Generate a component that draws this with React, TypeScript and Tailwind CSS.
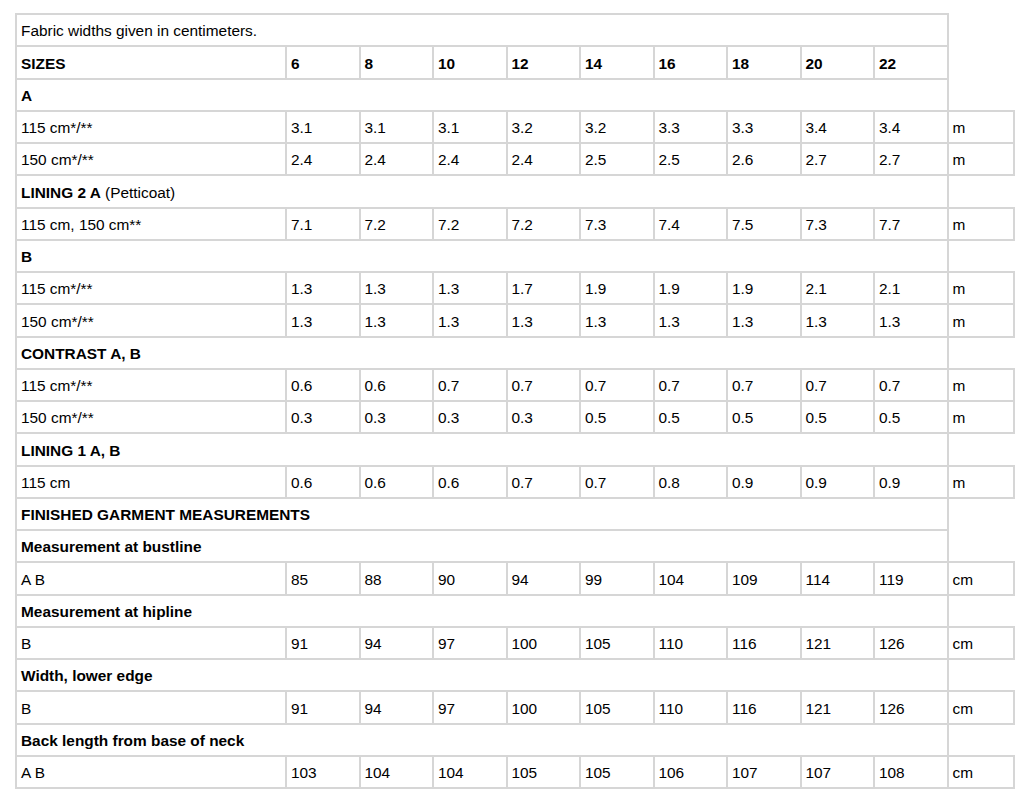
import React from "react";

type Row =
  | { kind: "note"; text: string }
  | { kind: "sizes"; cells: string[] }
  | { kind: "section"; bold: string; rest?: string }
  | { kind: "data"; label: string; values: string[]; unit: string };

const rows: Row[] = [
  { kind: "note", text: "Fabric widths given in centimeters." },
  { kind: "sizes", cells: ["SIZES", "6", "8", "10", "12", "14", "16", "18", "20", "22"] },
  { kind: "section", bold: "A" },
  { kind: "data", label: "115 cm*/**", values: ["3.1", "3.1", "3.1", "3.2", "3.2", "3.3", "3.3", "3.4", "3.4"], unit: "m" },
  { kind: "data", label: "150 cm*/**", values: ["2.4", "2.4", "2.4", "2.4", "2.5", "2.5", "2.6", "2.7", "2.7"], unit: "m" },
  { kind: "section", bold: "LINING 2 A", rest: " (Petticoat)" },
  { kind: "data", label: "115 cm, 150 cm**", values: ["7.1", "7.2", "7.2", "7.2", "7.3", "7.4", "7.5", "7.3", "7.7"], unit: "m" },
  { kind: "section", bold: "B" },
  { kind: "data", label: "115 cm*/**", values: ["1.3", "1.3", "1.3", "1.7", "1.9", "1.9", "1.9", "2.1", "2.1"], unit: "m" },
  { kind: "data", label: "150 cm*/**", values: ["1.3", "1.3", "1.3", "1.3", "1.3", "1.3", "1.3", "1.3", "1.3"], unit: "m" },
  { kind: "section", bold: "CONTRAST A, B" },
  { kind: "data", label: "115 cm*/**", values: ["0.6", "0.6", "0.7", "0.7", "0.7", "0.7", "0.7", "0.7", "0.7"], unit: "m" },
  { kind: "data", label: "150 cm*/**", values: ["0.3", "0.3", "0.3", "0.3", "0.5", "0.5", "0.5", "0.5", "0.5"], unit: "m" },
  { kind: "section", bold: "LINING 1 A, B" },
  { kind: "data", label: "115 cm", values: ["0.6", "0.6", "0.6", "0.7", "0.7", "0.8", "0.9", "0.9", "0.9"], unit: "m" },
  { kind: "section", bold: "FINISHED GARMENT MEASUREMENTS" },
  { kind: "section", bold: "Measurement at bustline" },
  { kind: "data", label: "A B", values: ["85", "88", "90", "94", "99", "104", "109", "114", "119"], unit: "cm" },
  { kind: "section", bold: "Measurement at hipline" },
  { kind: "data", label: "B", values: ["91", "94", "97", "100", "105", "110", "116", "121", "126"], unit: "cm" },
  { kind: "section", bold: "Width, lower edge" },
  { kind: "data", label: "B", values: ["91", "94", "97", "100", "105", "110", "116", "121", "126"], unit: "cm" },
  { kind: "section", bold: "Back length from base of neck" },
  { kind: "data", label: "A B", values: ["103", "104", "104", "105", "105", "106", "107", "107", "108"], unit: "cm" },
];

const cell = "border-2 border-[#d6d6d6] h-[32.25px] px-[4px] pt-[2px] pb-0 align-middle text-left";

export default function App() {
  return (
    <div
      className="bg-white min-h-[809px] pl-[15px] pt-[13px] text-black text-[15.4px] leading-[1.15]"
      style={{ fontFamily: '"Liberation Sans", Arial, Helvetica, sans-serif' }}
    >
      <table className="table-fixed border-collapse w-[998px]">
        <colgroup>
          <col className="w-[270px]" />
          <col className="w-[73.5px]" />
          <col className="w-[73.5px]" />
          <col className="w-[73.5px]" />
          <col className="w-[73.5px]" />
          <col className="w-[73.5px]" />
          <col className="w-[73.5px]" />
          <col className="w-[73.5px]" />
          <col className="w-[73.5px]" />
          <col className="w-[73.5px]" />
          <col className="w-[66.5px]" />
        </colgroup>
        <tbody>
          {rows.map((r, i) => {
            if (r.kind === "note") {
              return (
                <tr key={i}>
                  <td colSpan={10} className={cell}>
                    {r.text}
                  </td>
                </tr>
              );
            }
            if (r.kind === "sizes") {
              return (
                <tr key={i}>
                  {r.cells.map((c, j) => (
                    <td key={j} className={cell + " font-bold"}>
                      {c}
                    </td>
                  ))}
                </tr>
              );
            }
            if (r.kind === "section") {
              return (
                <tr key={i}>
                  <td colSpan={10} className={cell}>
                    <span className="font-bold">{r.bold}</span>
                    {r.rest}
                  </td>
                </tr>
              );
            }
            return (
              <tr key={i}>
                <td className={cell}>{r.label}</td>
                {r.values.map((v, j) => (
                  <td key={j} className={cell}>
                    {v}
                  </td>
                ))}
                <td className={cell}>{r.unit}</td>
              </tr>
            );
          })}
        </tbody>
      </table>
    </div>
  );
}
